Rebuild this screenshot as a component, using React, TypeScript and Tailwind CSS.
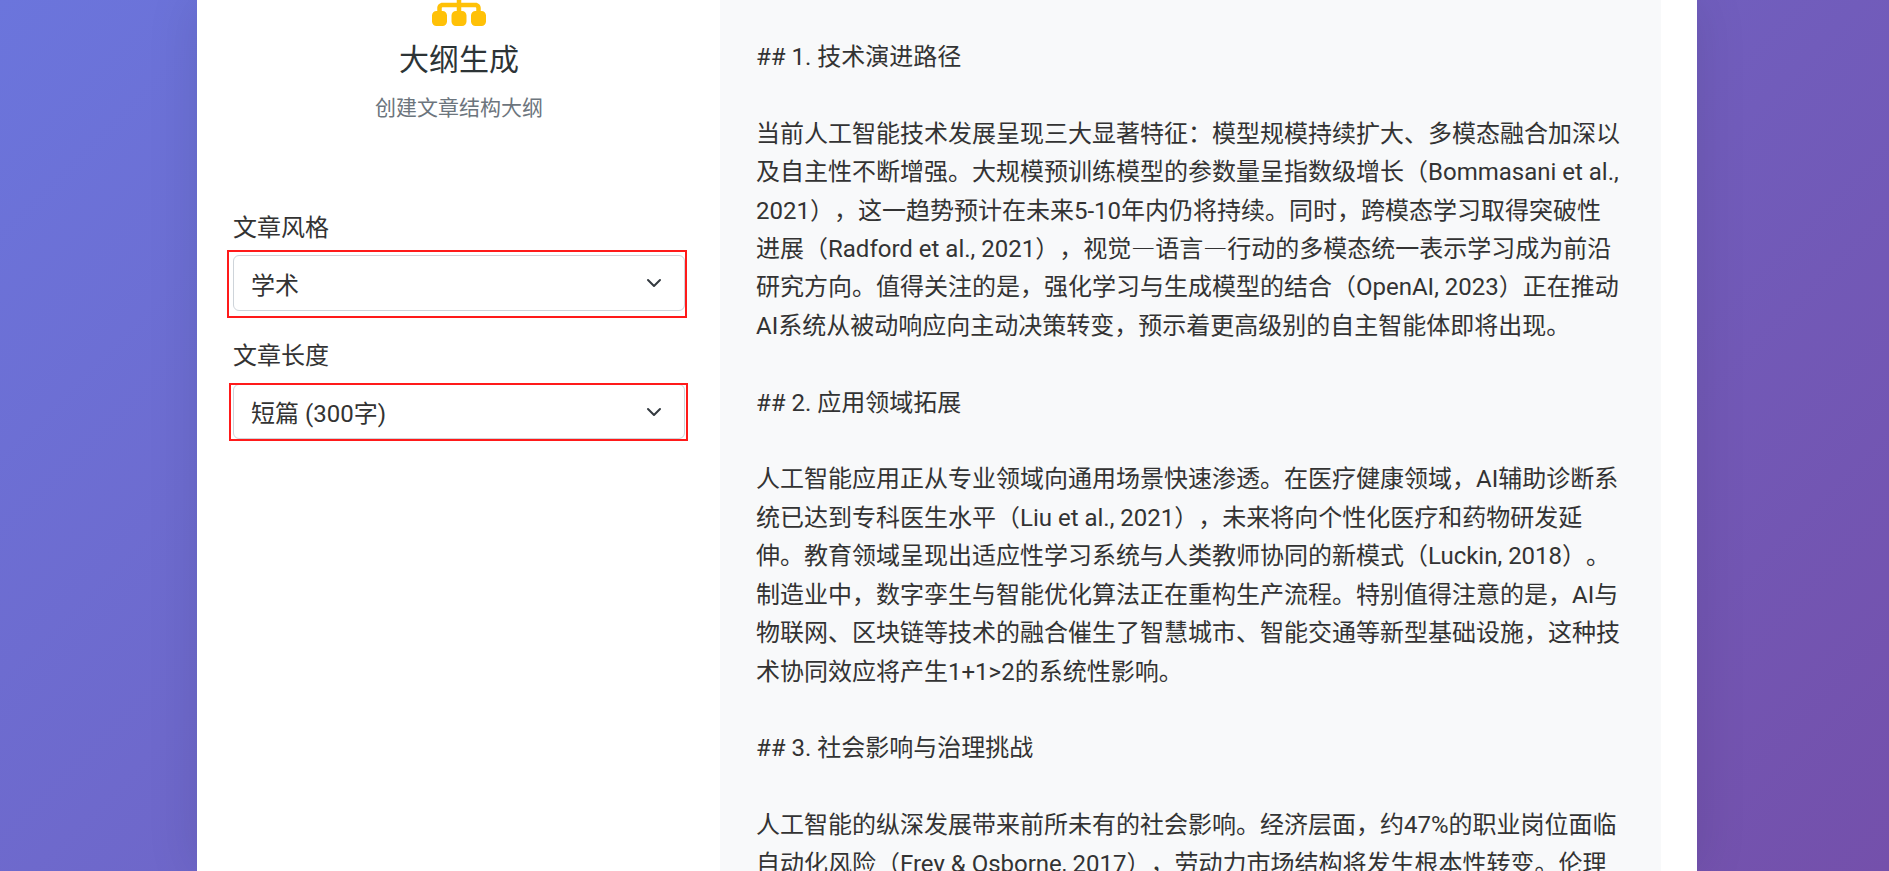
import { FaSitemap } from 'react-icons/fa6';

// \uFF0C \uFF1A \uFF08 \uFF09 are the full-width , : ( ) of the source text
const article = `## 1. 技术演进路径

当前人工智能技术发展呈现三大显著特征\uFF1A模型规模持续扩大、多模态融合加深以
及自主性不断增强。大规模预训练模型的参数量呈指数级增长\uFF08Bommasani et al.,
2021\uFF09\uFF0C这一趋势预计在未来5-10年内仍将持续。同时\uFF0C跨模态学习取得突破性
进展\uFF08Radford et al., 2021\uFF09\uFF0C视觉—语言—行动的多模态统一表示学习成为前沿
研究方向。值得关注的是\uFF0C强化学习与生成模型的结合\uFF08OpenAI, 2023\uFF09正在推动
AI系统从被动响应向主动决策转变\uFF0C预示着更高级别的自主智能体即将出现。

## 2. 应用领域拓展

人工智能应用正从专业领域向通用场景快速渗透。在医疗健康领域\uFF0CAI辅助诊断系
统已达到专科医生水平\uFF08Liu et al., 2021\uFF09\uFF0C未来将向个性化医疗和药物研发延
伸。教育领域呈现出适应性学习系统与人类教师协同的新模式\uFF08Luckin, 2018\uFF09。
制造业中\uFF0C数字孪生与智能优化算法正在重构生产流程。特别值得注意的是\uFF0CAI与
物联网、区块链等技术的融合催生了智慧城市、智能交通等新型基础设施\uFF0C这种技
术协同效应将产生1+1>2的系统性影响。

## 3. 社会影响与治理挑战

人工智能的纵深发展带来前所未有的社会影响。经济层面\uFF0C约47%的职业岗位面临
自动化风险\uFF08Frey & Osborne, 2017\uFF09\uFF0C劳动力市场结构将发生根本性转变。伦理`;

const font = { fontFamily: 'Roboto, "Noto Sans CJK SC", sans-serif' };

const Chevron = () => (
  <svg viewBox="0 0 16 16" className="w-4 h-4" fill="none" stroke="#343a40" strokeWidth="2" strokeLinecap="round" strokeLinejoin="round">
    <path d="m2 5 6 6 6-6" />
  </svg>
);

const Select = ({ value }: { value: string }) => (
  <div className="flex items-center justify-between h-full pl-[17px] pr-[22px] bg-white border border-[#ced4da] rounded-[6px] text-[24px] text-[#333]">
    <span className="pt-[5px]">{value}</span>
    <Chevron />
  </div>
);

export default function App() {
  return (
    <div lang="zh-CN" style={font} className="h-[871px] overflow-hidden bg-[linear-gradient(135deg,#6b75dc_0%,#7450ab_100%)]">
      <main className="ml-[197px] w-[1500px] h-[871px] bg-white shadow-[0_0_50px_rgba(0,0,0,0.1)]">
        <div className="grid grid-cols-[452px_941px] gap-x-[35px] pl-9 h-full">
          {/* Left column */}
          <section>
            <div className="-mt-[19px] flex flex-col items-center text-center">
              <FaSitemap className="w-[54px] h-[48px] text-[#ffc107]" />
              <h1 className="mt-[10px] text-[30px] leading-[42px] font-normal text-[#2d3436]">大纲生成</h1>
              <p className="mt-[12px] text-[21px] leading-[30px] text-[#6c757d]">创建文章结构大纲</p>
            </div>

            <label className="block mt-[87px] text-[24px] leading-[36px] text-[#333]">文章风格</label>
            <div className="relative mt-[9px] h-[56px]">
              <Select value="学术" />
              <div className="absolute -left-[6px] -right-[2px] -top-[5px] -bottom-[7px] border-2 border-[#ff1a1a]" />
            </div>

            <label className="block mt-[27px] text-[24px] leading-[36px] text-[#333]">文章长度</label>
            <div className="relative mt-[10px] h-[55px]">
              <Select value="短篇 (300字)" />
              <div className="absolute -left-[4px] -right-[3px] -top-[1px] -bottom-[2px] border-2 border-[#ff1a1a]" />
            </div>
          </section>

          {/* Right column */}
          <section className="bg-[#f8f9fa] pt-[38px] pl-[36px] text-[#333] h-full overflow-hidden">
            <div className="whitespace-pre text-[24px] leading-[38.4px] [text-spacing-trim:space-all]">
              {article.split('—').map((part, i) => (
                <span key={i}>
                  {i > 0 && <span className="leading-none" style={{ fontFamily: '"Noto Sans CJK SC", sans-serif' }}>—</span>}
                  {part}
                </span>
              ))}
            </div>
          </section>
        </div>
      </main>
    </div>
  );
}
